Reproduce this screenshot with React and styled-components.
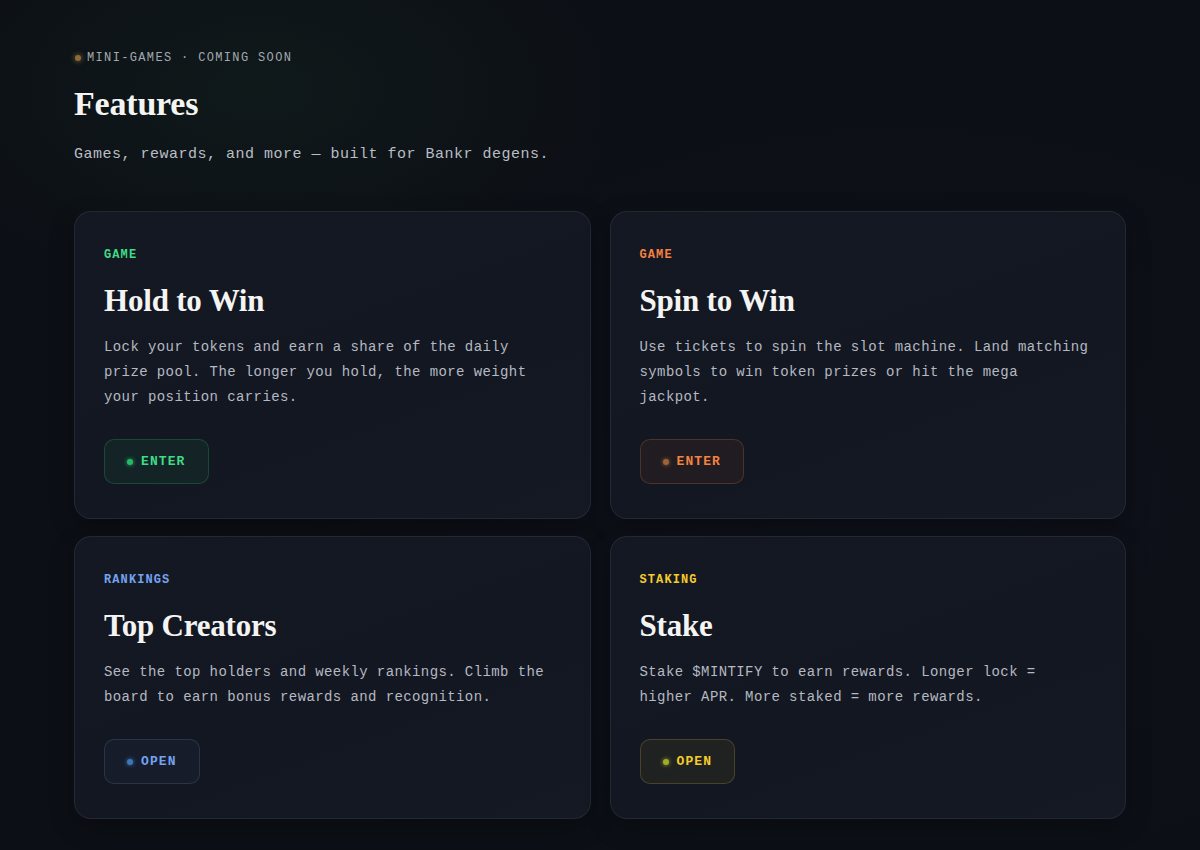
import styled, { createGlobalStyle } from "styled-components";

const GlobalStyle = createGlobalStyle`
  * { box-sizing: border-box; }
  html, body {
    margin: 0;
    padding: 0;
    background: #0c0f15;
  }
`;

const mono = `"Liberation Mono", "DejaVu Sans Mono", monospace`;
const serif = `"Liberation Serif", "DejaVu Serif", serif`;

const accents = {
  green: { text: "#3fdc86", dot: "#27b968", bg: "rgba(34, 197, 94, 0.07)", border: "rgba(52, 211, 120, 0.22)" },
  orange: { text: "#f5833f", dot: "#9a6438", bg: "rgba(249, 115, 22, 0.06)", border: "rgba(249, 140, 70, 0.2)" },
  blue: { text: "#74a3f0", dot: "#3a78b8", bg: "rgba(96, 140, 220, 0.05)", border: "rgba(140, 160, 200, 0.18)" },
  yellow: { text: "#f5cc2c", dot: "#9fae25", bg: "rgba(250, 204, 21, 0.06)", border: "rgba(230, 200, 80, 0.2)" },
};

const Page = styled.div`
  min-height: 850px;
  background:
    radial-gradient(ellipse 520px 300px at 260px 90px, rgba(30, 70, 50, 0.18), transparent 70%),
    radial-gradient(ellipse 900px 600px at 900px 500px, rgba(25, 35, 60, 0.12), transparent 70%),
    #0c0f15;
  padding: 49px 74px 30px;
`;

const Header = styled.header`
  display: flex;
  flex-direction: column;
`;

const Eyebrow = styled.div`
  display: flex;
  align-items: center;
  gap: 6px;
  font-family: ${mono};
  font-size: 12px;
  letter-spacing: 1.35px;
  color: #a3a8b0;
  line-height: 18px;
`;

const EyebrowDot = styled.span`
  width: 6px;
  height: 6px;
  margin-left: 1px;
  border-radius: 50%;
  background: #8a6c3c;
  box-shadow: 0 0 5px 1px rgba(170, 130, 60, 0.5);
`;

const Title = styled.h1`
  margin: 17px 0 0;
  font-family: ${serif};
  font-weight: 700;
  font-size: 34px;
  line-height: 40px;
  letter-spacing: -0.2px;
  color: #f4f4f2;
`;

const Subtitle = styled.p`
  margin: 19px 0 0;
  font-family: ${mono};
  font-size: 15px;
  letter-spacing: 0.5px;
  line-height: 24px;
  color: #b9bdc4;
`;

const Grid = styled.section`
  margin-top: 44px;
  display: grid;
  grid-template-columns: 1fr 1fr;
  column-gap: 19px;
  row-gap: 17px;
`;

const Card = styled.article`
  background: linear-gradient(160deg, #141822 0%, #131722 60%, #141924 100%);
  border: 1px solid rgba(255, 255, 255, 0.07);
  border-radius: 17px;
  padding: 36px 29px 34px;
  box-shadow: 0 8px 24px rgba(0, 0, 0, 0.25);
`;

const Tag = styled.div`
  font-family: ${mono};
  font-weight: 700;
  font-size: 12px;
  letter-spacing: 1.1px;
  line-height: 14px;
  color: ${(p) => accents[p.$tone].text};
`;

const CardTitle = styled.h2`
  margin: 21px 0 0;
  font-family: ${serif};
  font-weight: 700;
  font-size: 31px;
  line-height: 36px;
  letter-spacing: -0.2px;
  color: #f4f4f2;
`;

const CardText = styled.p`
  margin: 16px 0 0;
  max-width: 460px;
  font-family: ${mono};
  font-size: 14px;
  letter-spacing: 0.4px;
  line-height: 25px;
  color: #b5b9c1;
`;

const Action = styled.button`
  margin-top: 29px;
  display: inline-flex;
  align-items: center;
  gap: 8px;
  height: 45px;
  padding: 0 22px;
  border-radius: 10px;
  background: ${(p) => accents[p.$tone].bg};
  border: 1px solid ${(p) => accents[p.$tone].border};
  font-family: ${mono};
  font-weight: 700;
  font-size: 13px;
  letter-spacing: 1.1px;
  color: ${(p) => accents[p.$tone].text};
  cursor: pointer;
`;

const ActionDot = styled.span`
  width: 6px;
  height: 6px;
  border-radius: 50%;
  background: ${(p) => accents[p.$tone].dot};
  box-shadow: 0 0 4px ${(p) => accents[p.$tone].dot};
`;

const features = [
  {
    tag: "GAME",
    tone: "green",
    title: "Hold to Win",
    text: "Lock your tokens and earn a share of the daily prize pool. The longer you hold, the more weight your position carries.",
    action: "ENTER",
  },
  {
    tag: "GAME",
    tone: "orange",
    title: "Spin to Win",
    text: "Use tickets to spin the slot machine. Land matching symbols to win token prizes or hit the mega jackpot.",
    action: "ENTER",
  },
  {
    tag: "RANKINGS",
    tone: "blue",
    title: "Top Creators",
    text: "See the top holders and weekly rankings. Climb the board to earn bonus rewards and recognition.",
    action: "OPEN",
  },
  {
    tag: "STAKING",
    tone: "yellow",
    title: "Stake",
    text: "Stake $MINTIFY to earn rewards. Longer lock = higher APR. More staked = more rewards.",
    action: "OPEN",
  },
];

export default function App() {
  return (
    <>
      <GlobalStyle />
      <Page>
        <Header>
          <Eyebrow>
            <EyebrowDot />
            MINI-GAMES · COMING SOON
          </Eyebrow>
          <Title>Features</Title>
          <Subtitle>Games, rewards, and more — built for Bankr degens.</Subtitle>
        </Header>
        <Grid>
          {features.map((f) => (
            <Card key={f.title}>
              <Tag $tone={f.tone}>{f.tag}</Tag>
              <CardTitle>{f.title}</CardTitle>
              <CardText>{f.text}</CardText>
              <Action $tone={f.tone}>
                <ActionDot $tone={f.tone} />
                {f.action}
              </Action>
            </Card>
          ))}
        </Grid>
      </Page>
    </>
  );
}
